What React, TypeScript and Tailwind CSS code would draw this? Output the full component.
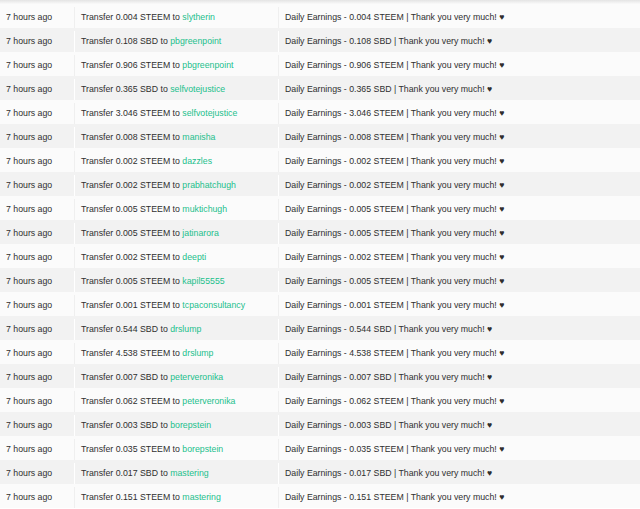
import React from "react";

const rows: [string, string, string][] = [
  ["0.004", "STEEM", "slytherin"],
  ["0.108", "SBD", "pbgreenpoint"],
  ["0.906", "STEEM", "pbgreenpoint"],
  ["0.365", "SBD", "selfvotejustice"],
  ["3.046", "STEEM", "selfvotejustice"],
  ["0.008", "STEEM", "manisha"],
  ["0.002", "STEEM", "dazzles"],
  ["0.002", "STEEM", "prabhatchugh"],
  ["0.005", "STEEM", "muktichugh"],
  ["0.005", "STEEM", "jatinarora"],
  ["0.002", "STEEM", "deepti"],
  ["0.005", "STEEM", "kapil55555"],
  ["0.001", "STEEM", "tcpaconsultancy"],
  ["0.544", "SBD", "drslump"],
  ["4.538", "STEEM", "drslump"],
  ["0.007", "SBD", "peterveronika"],
  ["0.062", "STEEM", "peterveronika"],
  ["0.003", "SBD", "borepstein"],
  ["0.035", "STEEM", "borepstein"],
  ["0.017", "SBD", "mastering"],
  ["0.151", "STEEM", "mastering"],
];

export default function App() {
  return (
    <div
      className="w-[640px] h-[509px] overflow-hidden bg-white text-[8.75px] text-[#2f2f2f]"
      style={{ fontFamily: '"Liberation Sans", Arial, sans-serif' }}
    >
      {/* top edge of the table */}
      <div className="h-[4px] bg-gradient-to-b from-[#e4e4e4] to-[#fafafa]" />
      {rows.map(([amount, coin, user], i) => {
        const odd = i % 2 === 0;
        const sep = odd ? "border-[#efefef]" : "border-white";
        return (
          <div
            key={i}
            className={`flex h-[24px] items-center pt-[3px] ${odd ? "bg-[#fbfbfb]" : "bg-[#f2f2f2]"}`}
          >
            <div className={`w-[75px] h-full flex items-center pl-[6px] border-r ${sep}`}>
              7 hours ago
            </div>
            <div className={`w-[204px] h-full flex items-center pl-[6px] border-r ${sep}`}>
              Transfer {amount} {coin} to&nbsp;
              <span className="text-[#1cc08c]">{user}</span>
            </div>
            <div className="flex-1 h-full flex items-center pl-[6px] whitespace-pre">
              Daily Earnings - {amount} {coin} | Thank you very much! ♥
            </div>
          </div>
        );
      })}
    </div>
  );
}
